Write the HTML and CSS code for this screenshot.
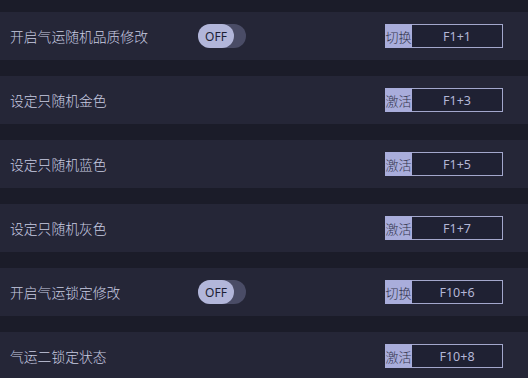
FILE: index.html
```html
<!DOCTYPE html>
<html lang="zh-CN">
<head>
<meta charset="utf-8">
<link rel="stylesheet" href="styles.css">
</head>
<body>
<div class="list">
  <div class="row">
    <span class="label">开启气运随机品质修改</span>
    <div class="toggle"><span class="knob">OFF</span></div>
    <div class="key"><span class="key-tag">切换</span><span class="key-val">F1+1</span></div>
  </div>
  <div class="row">
    <span class="label">设定只随机金色</span>
    <div class="key"><span class="key-tag">激活</span><span class="key-val">F1+3</span></div>
  </div>
  <div class="row">
    <span class="label">设定只随机蓝色</span>
    <div class="key"><span class="key-tag">激活</span><span class="key-val">F1+5</span></div>
  </div>
  <div class="row">
    <span class="label">设定只随机灰色</span>
    <div class="key"><span class="key-tag">激活</span><span class="key-val">F1+7</span></div>
  </div>
  <div class="row">
    <span class="label">开启气运锁定修改</span>
    <div class="toggle"><span class="knob">OFF</span></div>
    <div class="key"><span class="key-tag">切换</span><span class="key-val">F10+6</span></div>
  </div>
  <div class="row">
    <span class="label">气运二锁定状态</span>
    <div class="key"><span class="key-tag">激活</span><span class="key-val">F10+8</span></div>
  </div>
</div>
</body>
</html>
```
FILE: styles.css
```css
html, body {
  margin: 0;
  padding: 0;
  background: #1b1c29;
  height: 100%;
  overflow: hidden;
}
.list {
  display: flex;
  flex-direction: column;
  gap: 16px;
  padding-top: 12px;
}
.row {
  display: flex;
  align-items: center;
  height: 48px;
  background: #252637;
  padding-left: 10px;
  padding-right: 25px;
}
.label {
  width: 188px;
  flex: none;
  font-family: "Noto Sans CJK SC", sans-serif;
  font-size: 13.8px;
  font-weight: 300;
  color: #c9cce2;
  white-space: nowrap;
}
.toggle {
  width: 48px;
  height: 24px;
  border-radius: 12px;
  background: #4a4c66;
  display: flex;
}
.knob {
  width: 36px;
  height: 24px;
  border-radius: 12px;
  background: #b2b6da;
  color: #1d1f34;
  font-family: "Noto Sans", sans-serif;
  font-size: 12px;
  display: flex;
  align-items: center;
  justify-content: center;
}
.key {
  margin-left: auto;
  width: 118px;
  height: 24px;
  display: flex;
}
.key-tag {
  width: 27px;
  flex: none;
  background: #a9addb;
  color: #34364f;
  font-family: "Noto Sans CJK SC", sans-serif;
  font-size: 13px;
  font-weight: 300;
  display: flex;
  align-items: center;
  justify-content: center;
}
.key-val {
  flex: 1;
  box-sizing: border-box;
  border: 1px solid #a3a7cc;
  border-left: none;
  background: #1f2133;
  color: #b3b7d6;
  font-family: "Noto Sans", sans-serif;
  font-size: 12.5px;
  display: flex;
  align-items: center;
  justify-content: center;
}
```
